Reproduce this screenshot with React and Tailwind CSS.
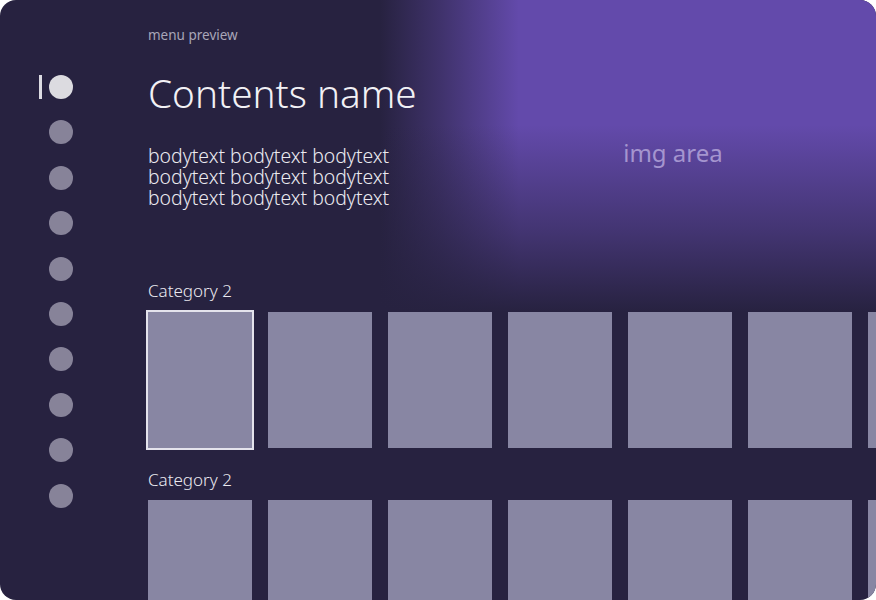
import React from "react";

const dots = Array.from({ length: 10 });
const cards = Array.from({ length: 7 });

function CardRow({ focused }) {
  return (
    <div className="flex gap-4">
      {cards.map((_, i) => (
        <div
          key={i}
          className={
            "w-[104px] h-[136px] shrink-0 bg-[#8886a3] " +
            (focused && i === 0 ? "ring-2 ring-[#e4e3ec]" : "")
          }
        />
      ))}
    </div>
  );
}

export default function App() {
  return (
    <div className="w-[876px] h-[600px] bg-white">
      <div className="relative w-[876px] h-[600px] rounded-2xl overflow-hidden bg-[#272240] font-['Noto_Sans',sans-serif] flex">
        {/* image area */}
        <div className="absolute left-[380px] top-0 right-0 h-[312px] bg-[#634aab]">
          <div className="absolute inset-0 bg-[linear-gradient(to_right,#272240_0%,rgba(39,34,64,0.6)_12%,rgba(39,34,64,0)_28%)]" />
          <div className="absolute inset-0 bg-[linear-gradient(to_top,#272240_0%,rgba(39,34,64,0.55)_25%,rgba(39,34,64,0)_60%)]" />
          <div className="absolute left-0 right-0 top-[135px] flex justify-center pl-[90px]">
            <span className="text-[24px] leading-[36px] text-[#a595cf]">img area</span>
          </div>
        </div>

        {/* sidebar */}
        <div className="relative w-[148px] shrink-0 flex flex-col pt-[75px] pl-[39px] gap-[21.4px]">
          {dots.map((_, i) => (
            <div key={i} className="flex items-center gap-[7px]">
              <div className={"w-[3px] h-[24px] " + (i === 0 ? "bg-[#dcdbe2]" : "bg-transparent")} />
              <div
                className={
                  "w-[24px] h-[24px] rounded-full " +
                  (i === 0 ? "bg-[#dcdbe0]" : "bg-[#878399]")
                }
              />
            </div>
          ))}
        </div>

        {/* main */}
        <div className="relative flex-1 flex flex-col min-w-0">
          <div className="pt-[26px] text-[13.5px] leading-[18px] text-[#a9a6b8]">menu preview</div>
          <div className="mt-[24px] text-[38.7px] leading-[50px] font-light text-[#f2f1f5]">
            Contents name
          </div>
          <div className="mt-[27px] text-[19.4px] leading-[21px] font-light text-[#ebeaf0]">
            <div>bodytext bodytext bodytext</div>
            <div>bodytext bodytext bodytext</div>
            <div>bodytext bodytext bodytext</div>
          </div>
          <div className="mt-[72px] text-[17px] leading-[22px] font-light text-[#ebeaf0]">Category 2</div>
          <div className="mt-[10px]">
            <CardRow focused />
          </div>
          <div className="mt-[21px] text-[17px] leading-[22px] font-light text-[#ebeaf0]">Category 2</div>
          <div className="mt-[9px]">
            <CardRow />
          </div>
        </div>
      </div>
    </div>
  );
}
